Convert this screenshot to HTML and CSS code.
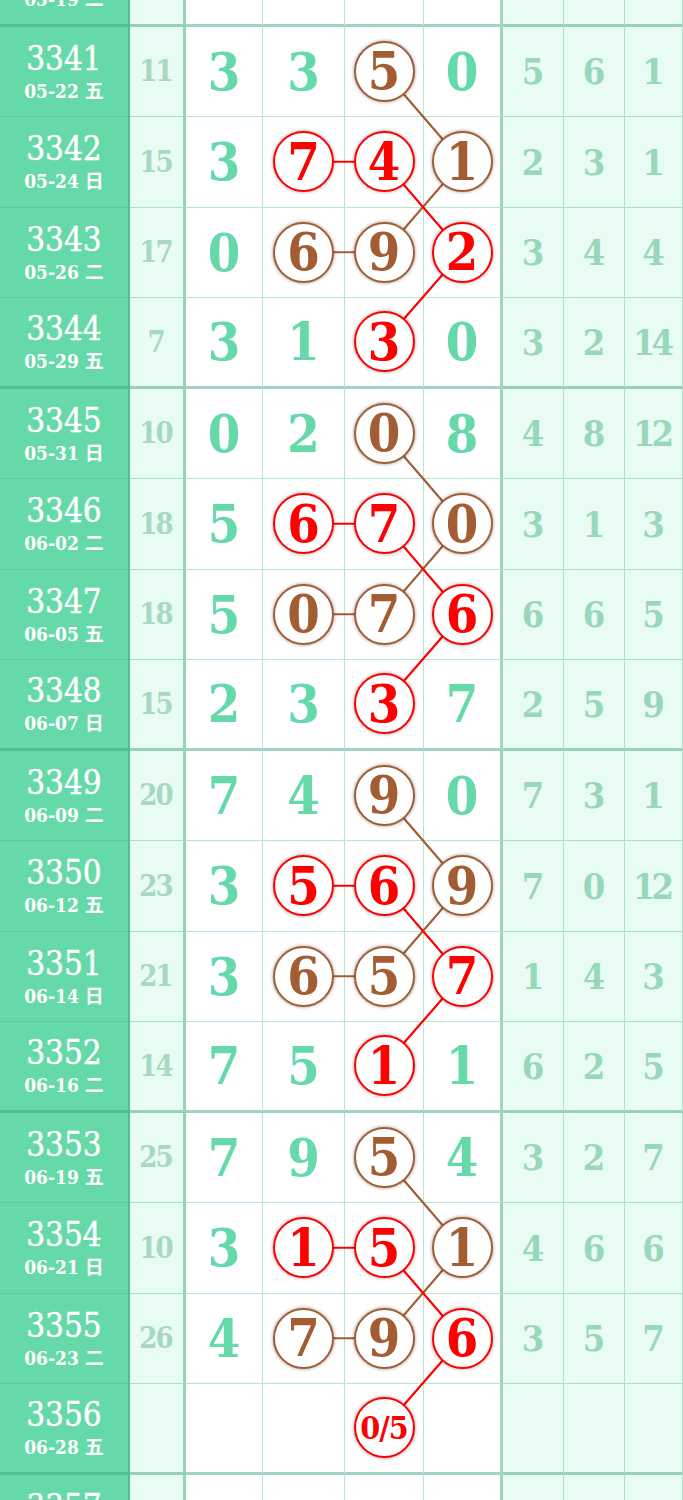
FILE: index.html
```html
<!DOCTYPE html>
<html>

<head>
  <title>Trend Chart</title>
  <link rel="stylesheet" href="styles.css">
</head>

<body>
  <div class="chart" id="chart">
    <svg class="lines" id="lines"></svg>
  </div>

  <script>
    // period, date, sum, digits (r = red ball, b = brown ball), missing counts
    const data = [
      ['3340', '05-19 二'],
      ['3341', '05-22 五', 11, ['3', '3', 'b5', '0'], [5, 6, 1]],
      ['3342', '05-24 日', 15, ['3', 'r7', 'r4', 'b1'], [2, 3, 1]],
      ['3343', '05-26 二', 17, ['0', 'b6', 'b9', 'r2'], [3, 4, 4]],
      ['3344', '05-29 五', 7, ['3', '1', 'r3', '0'], [3, 2, 14]],
      ['3345', '05-31 日', 10, ['0', '2', 'b0', '8'], [4, 8, 12]],
      ['3346', '06-02 二', 18, ['5', 'r6', 'r7', 'b0'], [3, 1, 3]],
      ['3347', '06-05 五', 18, ['5', 'b0', 'b7', 'r6'], [6, 6, 5]],
      ['3348', '06-07 日', 15, ['2', '3', 'r3', '7'], [2, 5, 9]],
      ['3349', '06-09 二', 20, ['7', '4', 'b9', '0'], [7, 3, 1]],
      ['3350', '06-12 五', 23, ['3', 'r5', 'r6', 'b9'], [7, 0, 12]],
      ['3351', '06-14 日', 21, ['3', 'b6', 'b5', 'r7'], [1, 4, 3]],
      ['3352', '06-16 二', 14, ['7', '5', 'r1', '1'], [6, 2, 5]],
      ['3353', '06-19 五', 25, ['7', '9', 'b5', '4'], [3, 2, 7]],
      ['3354', '06-21 日', 10, ['3', 'r1', 'r5', 'b1'], [4, 6, 6]],
      ['3355', '06-23 二', 26, ['4', 'b7', 'b9', 'r6'], [3, 5, 7]],
      ['3356', '06-28 五', '', ['', '', 'r0/5', ''], ['', '', '']],
      ['3357', '06-30 日']
    ];

    const chart = document.getElementById('chart');
    const svg = document.getElementById('lines');

    function cell(cls, html) {
      const div = document.createElement('div');
      div.className = 'cell ' + cls;
      div.innerHTML = html;
      return div;
    }

    data.forEach(function (r) {
      const row = document.createElement('div');
      row.className = 'row' + (Number(r[0]) % 4 === 0 ? ' end' : '');

      row.appendChild(cell('period', '<div class="no">' + r[0] + '</div><div class="date">' + r[1] + '</div>'));
      row.appendChild(cell('sum', r[2] === undefined ? '' : r[2]));

      const digits = r[3] || ['', '', '', ''];
      digits.forEach(function (d, i) {
        let html = d;
        if (d[0] === 'r' || d[0] === 'b') {
          const small = d.length > 2 ? ' small' : '';
          html = '<span class="ball ' + (d[0] === 'r' ? 'red' : 'brown') + small +
            '" id="b' + r[0] + '-' + i + '">' + d.slice(1) + '</span>';
        }
        row.appendChild(cell('num' + (i === 3 ? ' last' : ''), html));
      });

      const miss = r[4] || ['', '', ''];
      miss.forEach(function (m) {
        row.appendChild(cell('miss', m));
      });

      chart.insertBefore(row, svg);
    });

    function center(id) {
      const el = document.getElementById(id);
      if (!el) return null;
      const box = el.getBoundingClientRect();
      const base = chart.getBoundingClientRect();
      return (box.left - base.left + box.width / 2) + ',' + (box.top - base.top + box.height / 2);
    }

    function line(points, color) {
      const pts = points.map(center).filter(Boolean);
      if (pts.length < 2) return;
      const pl = document.createElementNS('http://www.w3.org/2000/svg', 'polyline');
      pl.setAttribute('points', pts.join(' '));
      pl.setAttribute('stroke', color);
      pl.setAttribute('stroke-width', '2.2');
      pl.setAttribute('fill', 'none');
      svg.appendChild(pl);
    }

    for (let p = 3341; p <= 3353; p += 4) {
      line(['b' + p + '-2', 'b' + (p + 1) + '-3', 'b' + (p + 2) + '-2', 'b' + (p + 2) + '-1'], '#a35d33');
      line(['b' + (p + 1) + '-1', 'b' + (p + 1) + '-2', 'b' + (p + 2) + '-3', 'b' + (p + 3) + '-2'], '#ff0000');
    }
  </script>
</body>

</html>
```

FILE: styles.css
```css
body {
  margin: 0;
  background-color: #fff;
  font-family: "DejaVu Serif", "Noto Sans CJK SC", serif;
  font-stretch: condensed;
  overflow: hidden;
}

.chart {
  position: relative;
  width: 683px;
  margin-top: -64px;
}

.row {
  display: grid;
  grid-template-columns: 130px 56px 77px 82px 79px 79px 61px 61px 58px;
  height: 90.5px;
}

.cell {
  display: flex;
  align-items: center;
  justify-content: center;
  box-sizing: border-box;
  border-right: 1px solid rgba(50, 180, 120, 0.35);
  border-bottom: 1px solid rgba(50, 180, 120, 0.35);
  font-weight: bold;
}

.row.end .cell {
  border-bottom: 3px solid rgba(50, 160, 110, 0.45);
}

.period {
  flex-direction: column;
  background-color: #66d9a9;
  color: #fff;
  border-right: 2px solid rgba(50, 160, 110, 0.45);
}

.period .no {
  font-size: 33px;
  font-weight: normal;
  line-height: 36px;
  margin-top: 2px;
  -webkit-text-stroke: 0.4px #fff;
}

.period .date {
  font-size: 19px;
  line-height: 25px;
  margin-top: 2px;
}

.sum {
  background-color: #e8fcf3;
  color: #a6d9c0;
  font-size: 29px;
  letter-spacing: -2px;
  padding-right: 2px;
  border-right: 3px solid rgba(50, 160, 110, 0.45);
}

.num {
  background-color: #fff;
  color: #66d9a9;
  font-size: 52px;
}

.num.last {
  border-right: 3px solid rgba(50, 160, 110, 0.45);
}

.miss {
  background-color: #e8fcf4;
  color: #99d7bb;
  font-size: 36px;
  letter-spacing: -4px;
  padding-right: 4px;
}

.lines {
  position: absolute;
  top: 0;
  left: 0;
  width: 100%;
  height: 100%;
  z-index: 1;
  pointer-events: none;
}

.ball {
  position: relative;
  z-index: 2;
  display: flex;
  align-items: center;
  justify-content: center;
  width: 61px;
  height: 61px;
  box-sizing: border-box;
  border-radius: 50%;
  border: 2.5px solid;
  background-color: #fff;
  box-shadow: 0 0 3px 1px rgba(0, 0, 0, 0.25);
  line-height: 1;
}

.ball.red {
  color: #ff0000;
  border-color: #ff0000;
}

.ball.brown {
  color: #a35d33;
  border-color: #a35d33;
}

.ball.small {
  font-size: 32px;
  letter-spacing: -1px;
}
```
